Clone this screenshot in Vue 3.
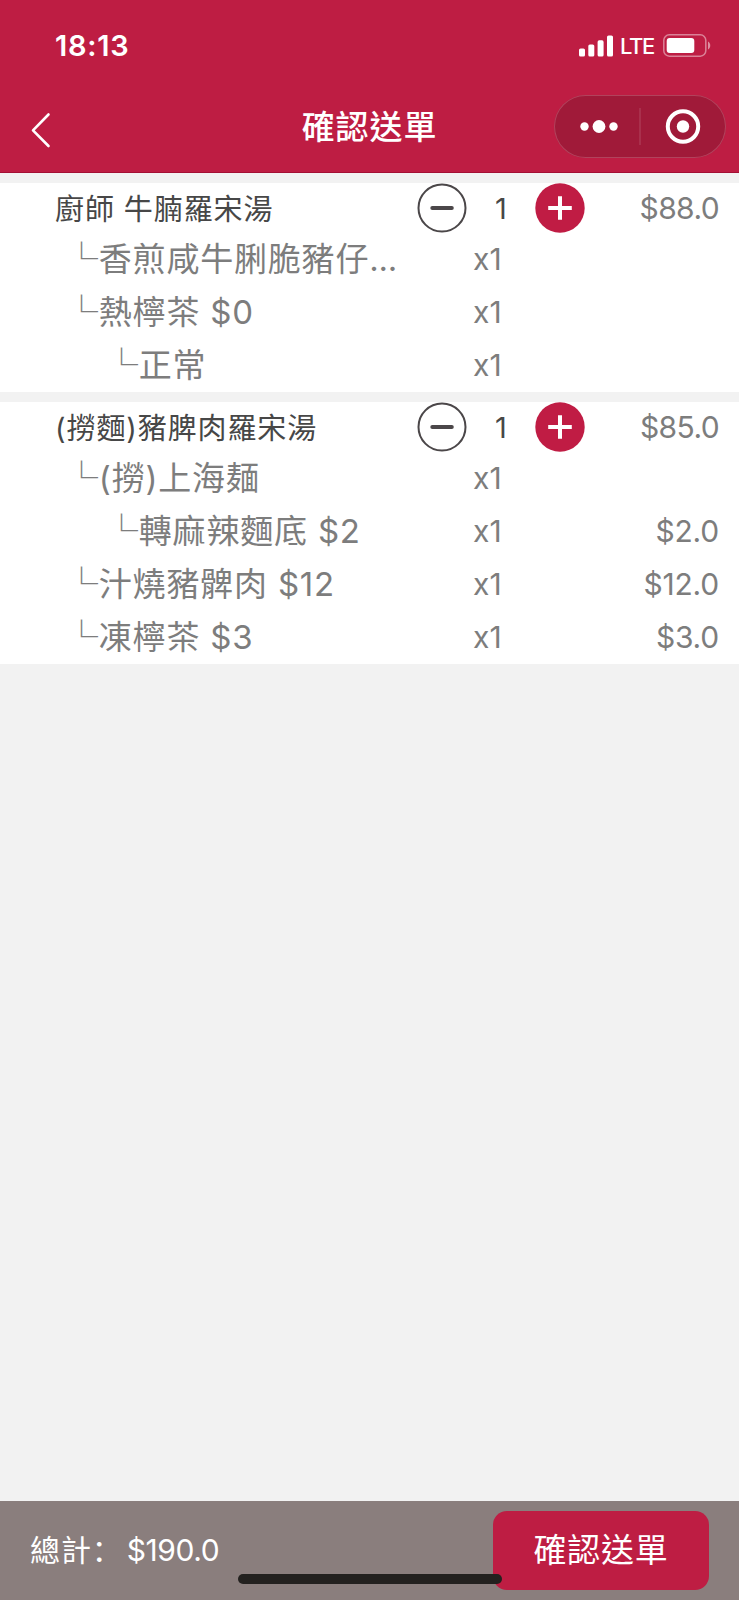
<script setup>
import { ref, computed } from 'vue'

const dishes = ref([
  {
    name: '廚師 牛腩羅宋湯',
    qty: 1,
    price: 88,
    extras: [
      { name: '香煎咸牛脷脆豬仔', clipped: true, level: 1, price: 0 },
      { name: '熱檸茶 $0', level: 1, price: 0 },
      { name: '正常', level: 2, price: 0 }
    ]
  },
  {
    name: '(撈麵)豬脾肉羅宋湯',
    qty: 1,
    price: 85,
    extras: [
      { name: '(撈)上海麺', level: 1, price: 0 },
      { name: '轉麻辣麵底 $2', level: 2, price: 2 },
      { name: '汁燒豬髀肉 $12', level: 1, price: 12 },
      { name: '凍檸茶 $3', level: 1, price: 3 }
    ]
  }
])

const money = (n) => '$' + n.toFixed(1)
const total = computed(() =>
  dishes.value.reduce(
    (sum, d) => sum + d.qty * (d.price + d.extras.reduce((s, e) => s + e.price, 0)),
    0
  )
)
const change = (dish, step) => {
  dish.qty = Math.max(1, dish.qty + step)
}
</script>

<template>
  <div class="page">
    <header class="header">
      <div class="status">
        <span class="time">18:13</span>
        <div class="signals">
          <svg class="bars" width="34" height="22" viewBox="0 0 34 22" fill="#fff">
            <rect x="0" y="13.5" width="6" height="8" rx="1.6" />
            <rect x="9.3" y="9.5" width="6" height="12" rx="1.6" />
            <rect x="18.6" y="5.3" width="6" height="16.2" rx="1.6" />
            <rect x="28" y="0.5" width="6" height="21" rx="1.6" />
          </svg>
          <span class="lte">LTE</span>
          <svg class="battery" width="48" height="23" viewBox="0 0 48 23">
            <rect x="0.8" y="0.8" width="42" height="21.4" rx="5.5" fill="none" stroke="#fff" stroke-opacity=".45" stroke-width="1.5" />
            <rect x="3.7" y="4" width="27.6" height="15" rx="3" fill="#fff" />
            <path d="M45 7.5c3 1.6 3 6.400 0 8z" fill="#fff" fill-opacity=".5" />
          </svg>
        </div>
      </div>
      <div class="nav">
        <svg class="back" width="22" height="36" viewBox="0 0 22 36" fill="none" stroke="#fff" stroke-width="2.6" stroke-linecap="round" stroke-linejoin="round">
          <path d="M18.500 2.500L3 18.300L18.500 34" />
        </svg>
        <h1 class="title">確認送單</h1>
        <div class="capsule">
          <svg width="172" height="62" viewBox="0 0 172 62">
            <g fill="#fff">
              <circle cx="30.500" cy="31.500" r="4.200" />
              <circle cx="45" cy="31.500" r="6.400" />
              <circle cx="59.500" cy="31.500" r="4.200" />
              <circle cx="129" cy="31.500" r="6.200" />
            </g>
            <path d="M86 13v37" stroke="#fff" stroke-opacity=".2" />
            <circle cx="129" cy="31.500" r="15.200" fill="none" stroke="#fff" stroke-width="4" />
          </svg>
        </div>
      </div>
    </header>

    <main class="list">
      <section v-for="dish in dishes" :key="dish.name" class="card">
        <div class="row dish">
          <span class="name">{{ dish.name }}</span>
          <div class="stepper">
            <button class="step minus" @click="change(dish, -1)">
              <svg width="50" height="50" viewBox="0 0 50 50" fill="none" stroke="#4b4749">
                <circle cx="25" cy="25" r="23.500" stroke-width="2" />
                <path d="M15.300 25h19.500" stroke-width="4" stroke-linecap="round" />
              </svg>
            </button>
            <span class="count">{{ dish.qty }}</span>
            <button class="step plus" @click="change(dish, 1)">
              <svg width="50" height="50" viewBox="0 0 50 50" stroke="#fff">
                <circle cx="25" cy="25" r="24.700" fill="#c01c44" stroke="none" />
                <path d="M13.200 25h23.600M25 13.200v23.600" stroke-width="4" />
              </svg>
            </button>
          </div>
          <span class="price">{{ money(dish.price) }}</span>
        </div>
        <div v-for="extra in dish.extras" :key="extra.name" class="row extra" :class="'level-' + extra.level">
          <span class="name"><span class="branch">└</span>{{ extra.name }}<span v-if="extra.clipped" class="dots">...</span></span>
          <span class="times">x1</span>
          <span class="price">{{ extra.price ? money(extra.price) : '' }}</span>
        </div>
      </section>
    </main>

    <footer class="footer">
      <div class="total">總計<span class="colon">：</span><span class="sum">{{ money(total) }}</span></div>
      <button class="submit">確認送單</button>
      <div class="home-bar"></div>
    </footer>
  </div>
</template>

<style>
body {
  background: #f2f2f2;
}
</style>

<style scoped>
.page {
  display: flex;
  flex-direction: column;
  height: 1600px;
  overflow: hidden;
  background: #f2f2f2;
  font-family: Inter, "Noto Sans CJK TC", sans-serif;
}
button {
  border: 0;
  padding: 0;
  background: none;
  font-family: inherit;
}
svg {
  display: block;
}
.header {
  box-sizing: border-box;
  height: 173px;
  background: #be1d43;
  border-bottom: 1px solid #a30f35;
  color: #fff;
}
.status {
  display: flex;
  justify-content: space-between;
  align-items: center;
  box-sizing: border-box;
  height: 91px;
  padding: 0 28px 0 55px;
}
.time {
  font-size: 29px;
  font-weight: 600;
  letter-spacing: 0.7px;
}
.signals {
  display: flex;
  align-items: center;
}
.lte {
  margin: 1px 8px 0 7px;
  width: 35px;
  font-size: 22px;
  font-weight: 500;
  letter-spacing: -1.4px;
}
.nav {
  display: grid;
  grid-template-columns: 1fr auto 1fr;
  align-items: center;
  height: 70px;
  padding: 0 13px 0 30px;
}
.back {
  margin-top: 8px;
}
.title {
  margin: 2px 0 0 -17px;
  font-size: 33px;
  font-weight: 500;
  letter-spacing: 0.9px;
  line-height: 48px;
}
.capsule {
  justify-self: end;
  box-sizing: border-box;
  width: 172px;
  height: 63px;
  border-radius: 32px;
  background: #a01a39;
  box-shadow: inset 0 0 0 1px rgba(255, 255, 255, 0.18);
}
.list {
  flex: 1;
  display: flex;
  flex-direction: column;
  gap: 10px;
  padding-top: 10px;
}
.card {
  background: #fff;
}
.row {
  display: flex;
  align-items: center;
  box-sizing: border-box;
  height: 53px;
  padding-right: 20px;
  color: #7d7d7d;
}
.dish {
  height: 50px;
}
.name {
  box-sizing: border-box;
  width: 417px;
  padding-left: 55px;
  white-space: nowrap;
}
.dish .name {
  padding-bottom: 3px;
  color: #474747;
  font-size: 29px;
  letter-spacing: 0.9px;
}
.extra .name {
  padding-left: 65px;
  padding-bottom: 6px;
  font-size: 33px;
  letter-spacing: 0.8px;
}
.extra.level-2 .name {
  padding-left: 105px;
}
.branch {
  font-family: "Noto Sans CJK TC", sans-serif;
}
.dots {
  letter-spacing: -0.3px;
}
.stepper {
  display: flex;
  align-items: center;
  justify-content: space-between;
  width: 168px;
}
.count {
  color: #474747;
  font-size: 29px;
}
.times {
  box-sizing: border-box;
  width: 168px;
  padding-left: 56px;
  padding-bottom: 2px;
  font-size: 30px;
}
.price {
  flex: 1;
  text-align: right;
  font-size: 30px;
  letter-spacing: -0.2px;
}
.dish .price {
  letter-spacing: -0.6px;
}
.extra .price {
  padding-bottom: 2px;
}
.footer {
  position: relative;
  display: flex;
  justify-content: space-between;
  align-items: center;
  box-sizing: border-box;
  height: 99px;
  padding: 0 30px;
  background: #8a7e7d;
  color: #fff;
}
.total {
  padding-bottom: 5px;
  font-size: 30px;
  letter-spacing: 0.9px;
}
.colon {
  margin-right: 4px;
  font-family: "Noto Sans CJK SC", sans-serif;
}
.sum {
  letter-spacing: -0.4px;
}
.submit {
  width: 216px;
  height: 79px;
  padding-bottom: 5px;
  border-radius: 14px;
  background: #be1d43;
  color: #fff;
  font-size: 33px;
  letter-spacing: 0.7px;
}
.home-bar {
  position: absolute;
  left: 238px;
  bottom: 16px;
  width: 264px;
  height: 10px;
  border-radius: 5px;
  background: #23211f;
}
</style>
